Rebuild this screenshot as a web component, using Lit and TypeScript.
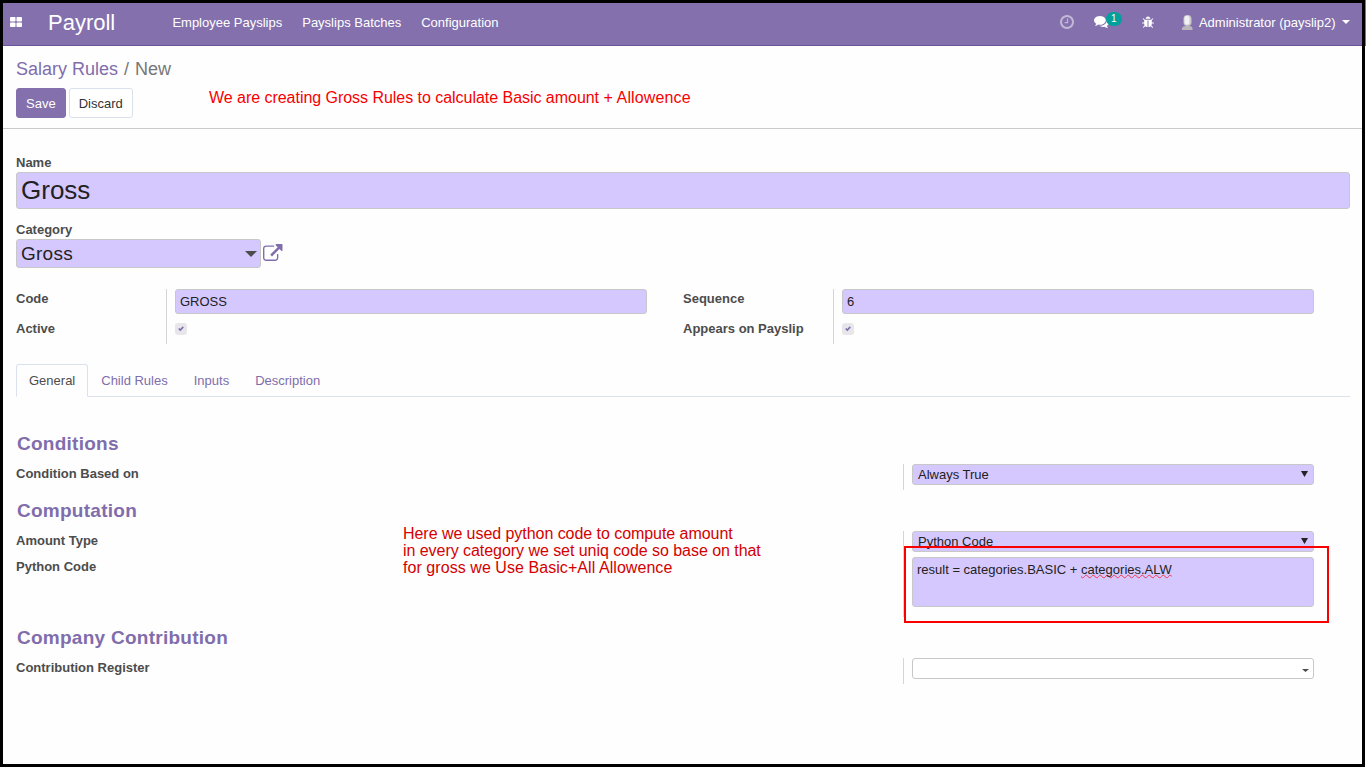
import { LitElement, html, css } from "lit";
import { customElement, property } from "lit/decorators.js";

const ICONS: Record<string, { box: string; d: string }> = {
  apps: {
    box: "64 128 1664 1408",
    d: "M832 1024v384q0 52-38 90t-90 38h-512q-52 0-90-38t-38-90v-384q0-52 38-90t90-38h512q52 0 90 38t38 90zm0-768v384q0 52-38 90t-90 38h-512q-52 0-90-38t-38-90v-384q0-52 38-90t90-38h512q52 0 90 38t38 90zm896 768v384q0 52-38 90t-90 38h-512q-52 0-90-38t-38-90v-384q0-52 38-90t90-38h512q52 0 90 38t38 90zm0-768v384q0 52-38 90t-90 38h-512q-52 0-90-38t-38-90v-384q0-52 38-90t90-38h512q52 0 90 38t38 90z",
  },
  clock: {
    box: "128 128 1536 1536",
    d: "M1024 544v448q0 14-9 23t-23 9h-320q-14 0-23-9t-9-23v-64q0-14 9-23t23-9h224v-352q0-14 9-23t23-9h64q14 0 23 9t9 23zm416 352q0-148-73-273t-198-198-273-73-273 73-198 198-73 273 73 273 198 198 273 73 273-73 198-198 73-273zm224 0q0 209-103 385.5t-279.5 279.5-385.5 103-385.5-103-279.5-279.5-103-385.5 103-385.5 279.5-279.5 385.5-103 385.5 103 279.5 279.5 103 385.5z",
  },
  comments: {
    box: "0 256 1792 1408",
    d: "M1408 768q0 139-94 257t-256.5 186.5-353.5 68.5q-86 0-176-16-124 88-278 128-36 9-86 16h-3q-11 0-20.5-8t-11.5-21q-1-3-1-6.5t.5-6.5 2-6l2.5-5 3.5-5.5 4-5 4.5-5 4-4.5q5-6 23-25t26-29.5 22.5-29 25-38.5 20.5-44q-124-72-195-177t-71-224q0-139 94-257t256.5-186.5 353.5-68.5 353.5 68.5 256.5 186.5 94 257zm384 256q0 120-71 224.5t-195 176.5q10 24 20.5 44t25 38.5 22.5 29 26 29.5 23 25q1 1 4 4.5t4.5 5 4 5 3.5 5.5l2.5 5 2 6 .5 6.5-1 6.5q-3 14-13 22t-22 7q-50-7-86-16-154-40-278-128-90 16-176 16-271 0-472-132 58 4 88 4 161 0 309-45t264-129q125-92 192-212t67-254q0-77-23-152 129 71 204 178t75 230z",
  },
  bug: {
    box: "96 0 1600 1664",
    d: "M1696 960q0 26-19 45t-45 19h-224q0 171-67 290l208 209q19 19 19 45t-19 45q-18 19-45 19t-45-19l-198-197q-5 5-15 13t-42 28.5-65 36.5-82 29-97 13v-896h-128v896q-51 0-101.5-13.5t-87-33-66-39-43.5-32.5l-15-14-183 207q-20 21-48 21-24 0-43-16-19-18-20.5-44.5t15.5-46.5l202-227q-58-114-58-274h-224q-26 0-45-19t-19-45 19-45 45-19h224v-294l-173-173q-19-19-19-45t19-45 45-19 45 19l173 173h844l173-173q19-19 45-19t45 19 19 45-19 45l-173 173v294h224q26 0 45 19t19 45zm-480-576h-640q0-133 93.5-226.5t226.5-93.5 226.5 93.5 93.5 226.5z",
  },
  external: {
    box: "64 64 1792 1536",
    d: "M1472 992v320q0 119-84.5 203.5t-203.5 84.5h-832q-119 0-203.5-84.5t-84.5-203.5v-832q0-119 84.5-203.5t203.5-84.5h704q14 0 23 9t9 23v64q0 14-9 23t-23 9h-704q-66 0-113 47t-47 113v832q0 66 47 113t113 47h832q66 0 113-47t47-113v-320q0-14 9-23t23-9h64q14 0 23 9t9 23zm384-864v512q0 26-19 45t-45 19-45-19l-176-176-652 652q-10 10-23 10t-23-10l-114-114q-10-10-10-23t10-23l652-652-176-176q-19-19-19-45t19-45 45-19h512q26 0 45 19t19 45z",
  },
  check: {
    box: "0 0 8 7",
    d: "M0.2 3.9 L1.7 2.4 L3.1 3.7 L6.2 0.4 L7.8 1.9 L3.1 6.7 Z",
  },
  down: { box: "0 0 8 7", d: "M0 0h8L4 7z" },
  caret: { box: "0 0 8 4", d: "M0 0h8L4 4z" },
};

@customElement("ui-icon")
class UiIcon extends LitElement {
  static styles = css`
    :host {
      display: block;
      flex: none;
    }
    .glyph {
      display: block;
      width: 100%;
      height: 100%;
      fill: currentColor;
    }
  `;
  @property() name = "";
  render() {
    const icon = ICONS[this.name];
    return html`<svg class="glyph" viewBox=${icon.box} preserveAspectRatio="none"><path d=${icon.d}></path></svg>`;
  }
}

@customElement("app-root")
class AppRoot extends LitElement {
  static styles = css`
    :host {
      display: block;
      width: 1366px;
      height: 768px;
      overflow: hidden;
      font: 13px/18px "Liberation Sans", Arial, sans-serif;
      color: #4c4c4c;
      background: linear-gradient(#8370ad 0 45px, #6a539b 45px 46px, #fefefe 46px);
    }
    * {
      box-sizing: border-box;
    }
    .frame {
      position: relative;
      width: 1365px;
      height: 767px;
      border: 3px solid #000;
      background: #fefefe;
      display: flex;
      flex-direction: column;
      white-space: nowrap;
    }
    .navbar {
      height: 43px;
      flex: none;
      display: flex;
      align-items: center;
      padding: 0 12px 3px 7px;
      background: #8370ad;
      border-bottom: 1px solid #6a539b;
      color: #fff;
    }
    .apps {
      width: 12px;
      height: 10px;
      margin-bottom: 1px;
    }
    .brand {
      margin-left: 26px;
      width: 124.4px;
      font-size: 22px;
      line-height: 26px;
    }
    .menu {
      display: flex;
      gap: 20px;
    }
    .systray {
      margin-left: auto;
      display: flex;
      align-items: center;
    }
    .clock {
      width: 14px;
      height: 14px;
      opacity: 0.5;
      margin-bottom: 2px;
    }
    .chat {
      display: flex;
      width: 28px;
      margin: 0 20px 2px;
      position: relative;
    }
    .comments {
      width: 15px;
      height: 12px;
    }
    .badge {
      position: absolute;
      left: 12px;
      top: -4px;
      width: 16px;
      height: 14px;
      border-radius: 7px;
      background: #00a09d;
      font-size: 10px;
      line-height: 14px;
      text-align: center;
    }
    .bug {
      width: 12px;
      height: 12px;
      margin-bottom: 1px;
    }
    .avatar {
      display: block;
      width: 11px;
      height: 15px;
      margin: 0 5.7px 0 28.6px;
    }
    .nav-caret {
      width: 8px;
      height: 4px;
      margin: 0 0 1px 6.500px;
    }
    .panel {
      height: 83px;
      flex: none;
      padding: 12px 13px 0;
      border-bottom: 1px solid #cacaca;
    }
    .crumbs {
      display: flex;
      gap: 6px;
      font-size: 18px;
      line-height: 22px;
      height: 30px;
      color: #777;
    }
    .crumb-link,
    .tab {
      color: #806dac;
    }
    .buttons {
      display: flex;
      gap: 3px;
    }
    .btn {
      font: inherit;
      height: 30px;
      padding: 2px 9px 0;
      border: 1px solid #d9e2ec;
      border-radius: 3px;
      background: #fff;
      color: #333;
    }
    .btn-primary {
      background: #8370ad;
      border-color: #8370ad;
      color: #fff;
    }
    .sheet {
      padding: 25px 12px 0 13px;
    }
    .label {
      font-weight: bold;
    }
    .field {
      display: flex;
      align-items: center;
      justify-content: space-between;
      background: #d5c8ff;
      border: 1px solid #c8c8cb;
      border-radius: 3px;
      color: #222;
      padding: 0 4px;
    }
    .name {
      height: 37px;
      font-size: 26px;
      line-height: 30px;
      padding-bottom: 2px;
      margin-bottom: 12px;
    }
    .category {
      display: flex;
      align-items: center;
      gap: 2px;
      margin-bottom: 21px;
    }
    .category-field {
      width: 245px;
      height: 29px;
      font-size: 19px;
      letter-spacing: 0.25px;
      padding: 0 3px 0 4px;
    }
    .category-caret {
      width: 12px;
      height: 6px;
      margin-top: 1px;
      color: #4c4c4c;
    }
    .external {
      width: 19.5px;
      height: 17px;
      color: #806dac;
      margin-bottom: 2px;
    }
    .groups {
      display: grid;
      grid-template-columns: 667px 667px;
      height: 75px;
    }
    .group {
      display: grid;
      grid-template-columns: 150px 481px;
      height: 55px;
    }
    .labels {
      display: flex;
      flex-direction: column;
      gap: 12px;
      padding-top: 1px;
    }
    .values {
      border-left: 1px solid #d5d5d5;
      padding-left: 8px;
    }
    .line-input {
      height: 25px;
    }
    .checkbox {
      width: 12px;
      height: 12px;
      margin-top: 9px;
      border-radius: 3px;
      background: #e8e6ea;
      padding: 3px;
      color: #7c6bad;
    }
    .tick {
      width: 6px;
      height: 5.5px;
    }
    .tabs {
      display: flex;
      height: 33px;
      border-bottom: 1px solid #dbe2ec;
    }
    .tab {
      height: 33px;
      padding: 7px 12px;
      border: 1px solid transparent;
    }
    .tab-active {
      color: #4c4c4c;
      border-color: #dbe2ec;
      border-bottom-color: #fefefe;
      border-radius: 3px 3px 0 0;
      background: #fefefe;
    }
    .notebook {
      padding-top: 27px;
    }
    .heading {
      margin: 8px 0 8px;
      padding-left: 1px;
      font-size: 19px;
      letter-spacing: 0.26px;
      line-height: 24px;
      font-weight: bold;
      color: #806dac;
    }
    .row {
      display: grid;
      grid-template-columns: 887px 411px;
      height: 26px;
      margin-bottom: 9px;
    }
    .row-tall {
      height: 86px;
    }
    .row-labels {
      display: flex;
      flex-direction: column;
      gap: 8px;
      padding-top: 1px;
    }
    .select {
      height: 21px;
      padding: 0 5px;
    }
    .select-arrow {
      width: 7px;
      height: 6px;
      margin-bottom: 2px;
    }
    .textarea {
      height: 50px;
      margin-top: 5px;
      align-items: flex-start;
      justify-content: flex-start;
      padding-top: 3px;
      white-space: pre;
    }
    .misspelt {
      text-decoration: underline wavy #ef3b4d 1px;
      text-decoration-skip-ink: none;
      text-underline-offset: 0;
    }
    .blank {
      background: #fff;
      justify-content: flex-end;
      padding-right: 4px;
    }
    .blank-caret {
      width: 7px;
      height: 3px;
      margin-top: 4px;
      color: #4c4c4c;
    }
    .note {
      position: absolute;
      font-size: 16px;
      line-height: 17px;
      color: #f80000;
    }
    .note-top {
      left: 206px;
      top: 86px;
      letter-spacing: -0.035px;
    }
    .note-tail {
      letter-spacing: 0.13px;
    }
    .note-code {
      left: 400px;
      top: 522px;
      color: #d40000;
    }
    .tight {
      letter-spacing: -0.05px;
    }
    .loose {
      letter-spacing: 0.06px;
    }
    .highlight {
      position: absolute;
      left: 901px;
      top: 543px;
      width: 425px;
      height: 77px;
      border: 2px solid #f80000;
    }
  `;

  private group(first: string, value: string, second: string) {
    return html`<div class="group">
      <div class="labels"><div class="label">${first}</div><div class="label">${second}</div></div>
      <div class="values">
        <div class="field line-input">${value}</div>
        <div class="checkbox"><ui-icon class="tick" name="check"></ui-icon></div>
      </div>
    </div>`;
  }

  private select(value: string) {
    return html`<div class="field select">${value}<ui-icon class="select-arrow" name="down"></ui-icon></div>`;
  }

  render() {
    return html`<div class="frame">
      <nav class="navbar">
        <ui-icon class="apps" name="apps"></ui-icon>
        <div class="brand">Payroll</div>
        <div class="menu"><span>Employee Payslips</span><span>Payslips Batches</span><span>Configuration</span></div>
        <div class="systray">
          <ui-icon class="clock" name="clock"></ui-icon>
          <div class="chat"><ui-icon class="comments" name="comments"></ui-icon><span class="badge">1</span></div>
          <ui-icon class="bug" name="bug"></ui-icon>
          <svg class="avatar" viewBox="0 0 11 15">
            <path d="M0 15v-2q1-2 3.5-2h4q2.5 0 3 2v2z" fill="#b9b6bc"></path>
            <rect x="1.5" y="0" width="8" height="11" rx="3.8" fill="#c9c7cb"></rect>
            <rect x="2.5" y="0.8" width="5" height="9" rx="2.5" fill="#f1f0f2"></rect>
          </svg>
          <span>Administrator (payslip2)</span>
          <ui-icon class="nav-caret" name="caret"></ui-icon>
        </div>
      </nav>
      <header class="panel">
        <div class="crumbs"><span class="crumb-link">Salary Rules</span><span>/</span><span>New</span></div>
        <div class="buttons"><button class="btn btn-primary">Save</button><button class="btn">Discard</button></div>
      </header>
      <main class="sheet">
        <div class="label">Name</div>
        <div class="field name">Gross</div>
        <div class="label">Category</div>
        <div class="category">
          <div class="field category-field">Gross<ui-icon class="category-caret" name="caret"></ui-icon></div>
          <ui-icon class="external" name="external"></ui-icon>
        </div>
        <div class="groups">
          ${this.group("Code", "GROSS", "Active")} ${this.group("Sequence", "6", "Appears on Payslip")}
        </div>
        <div class="tabs">
          <div class="tab tab-active">General</div>
          <div class="tab">Child Rules</div>
          <div class="tab">Inputs</div>
          <div class="tab">Description</div>
        </div>
        <div class="notebook">
          <div class="heading">Conditions</div>
          <div class="row">
            <div class="row-labels"><div class="label">Condition Based on</div></div>
            <div class="values">${this.select("Always True")}</div>
          </div>
          <div class="heading">Computation</div>
          <div class="row row-tall">
            <div class="row-labels"><div class="label">Amount Type</div><div class="label">Python Code</div></div>
            <div class="values">
              ${this.select("Python Code")}
              <div class="field textarea">result = categories.BASIC + <span class="misspelt">categories.ALW</span></div>
            </div>
          </div>
          <div class="heading">Company Contribution</div>
          <div class="row">
            <div class="row-labels"><div class="label">Contribution Register</div></div>
            <div class="values">
              <div class="field select blank"><ui-icon class="blank-caret" name="caret"></ui-icon></div>
            </div>
          </div>
        </div>
      </main>
      <div class="note note-top">We are creating Gross Rules to calculate Basic amount <span class="note-tail">+ Allowence</span></div>
      <div class="note note-code">
        <div class="tight">Here we used python code to compute amount</div>
        <div class="tight">in every category we set uniq code so base on that</div>
        <div class="loose">for gross we Use Basic+All Allowence</div>
      </div>
      <div class="highlight"></div>
    </div>`;
  }
}
